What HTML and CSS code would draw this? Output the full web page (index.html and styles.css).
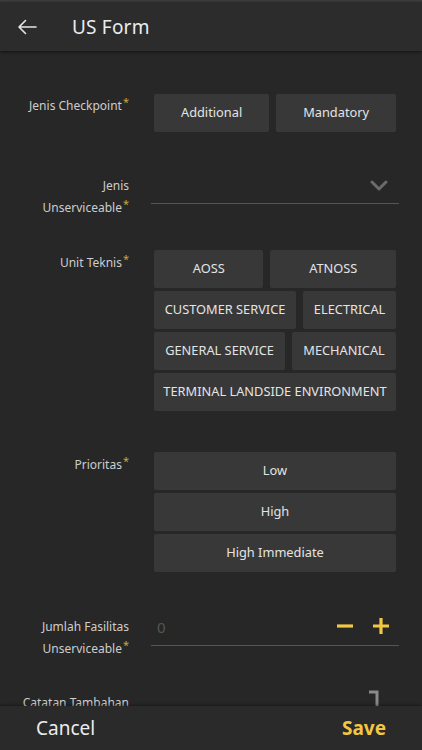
FILE: index.html
```html
<!DOCTYPE html>
<html>
<head>
<meta charset="utf-8">
<link rel="stylesheet" href="styles.css">
</head>
<body>
<div class="app">
  <header class="topbar">
    <svg class="back" width="20" height="16" viewBox="0 0 20 16"><path d="M19 8H2M8.5 1.5L2 8l6.5 6.5" fill="none" stroke="#e6e6e6" stroke-width="1.6" stroke-linecap="round" stroke-linejoin="round"/></svg>
    <h1 class="title">US Form</h1>
  </header>
  <main class="form">
    <div class="row row-first">
      <div class="label">Jenis Checkpoint<span class="req">*</span></div>
      <div class="field chips">
        <div class="chip">Additional</div>
        <div class="chip">Mandatory</div>
      </div>
    </div>
    <div class="row row-select">
      <div class="label">Jenis<br>Unserviceable<span class="req">*</span></div>
      <div class="field line-field">
        <svg class="chev" width="18" height="11" viewBox="0 0 18 11"><path d="M2 2l7 7 7-7" fill="none" stroke="#6a6a6a" stroke-width="3" stroke-linecap="round" stroke-linejoin="round"/></svg>
      </div>
    </div>
    <div class="row row-unit">
      <div class="label">Unit Teknis<span class="req">*</span></div>
      <div class="field chips wrap">
        <div class="chip">AOSS</div>
        <div class="chip">ATNOSS</div>
        <div class="chip">CUSTOMER SERVICE</div>
        <div class="chip">ELECTRICAL</div>
        <div class="chip">GENERAL SERVICE</div>
        <div class="chip">MECHANICAL</div>
        <div class="chip">TERMINAL LANDSIDE ENVIRONMENT</div>
      </div>
    </div>
    <div class="row row-prio">
      <div class="label">Prioritas<span class="req">*</span></div>
      <div class="field stack">
        <div class="chip">Low</div>
        <div class="chip">High</div>
        <div class="chip">High Immediate</div>
      </div>
    </div>
    <div class="row row-count">
      <div class="label">Jumlah Fasilitas<br>Unserviceable<span class="req">*</span></div>
      <div class="field line-field count">
        <span class="placeholder">0</span>
        <div class="steppers">
          <svg width="18" height="18" viewBox="0 0 18 18"><path d="M1 9h16" stroke="#f2c744" stroke-width="3.2"/></svg>
          <svg width="18" height="18" viewBox="0 0 18 18"><path d="M1 9h16M9 1v16" stroke="#f2c744" stroke-width="3.2"/></svg>
        </div>
      </div>
    </div>
    <div class="row row-notes">
      <div class="label">Catatan Tambahan</div>
      <div class="field notes">
        <svg class="resize" width="12" height="20" viewBox="0 0 12 20"><path d="M1 2h8v18" fill="none" stroke="#8a8a8a" stroke-width="3"/></svg>
      </div>
    </div>
  </main>
  <footer class="bottombar">
    <span class="cancel">Cancel</span>
    <span class="save">Save</span>
  </footer>
</div>
</body>
</html>
```
FILE: styles.css
```css
* { box-sizing: border-box; }
html, body { margin: 0; padding: 0; }
body {
  width: 422px;
  height: 750px;
  overflow: hidden;
  background: #272727;
  font-family: "Noto Sans", "Open Sans", sans-serif;
  color: #d6d6d6;
}
.app {
  position: relative;
  height: 750px;
  display: flex;
  flex-direction: column;
  border-top: 2px solid #3c3c3c;
}
.topbar {
  height: 49px;
  flex: none;
  display: flex;
  align-items: center;
  background: #2c2c2c;
  box-shadow: 0 1px 3px rgba(0,0,0,0.55);
  position: relative;
  z-index: 2;
}
.back { margin-left: 17px; margin-top: 1px; }
.title {
  margin: 0 0 0 35px;
  font-size: 19px;
  font-weight: 400;
  color: #ececec;
  letter-spacing: 0.2px;
}
.form {
  flex: 1;
  overflow: hidden;
  padding-top: 43px;
}
.row {
  display: flex;
  align-items: flex-start;
}
.label {
  width: 130px;
  flex: none;
  text-align: right;
  font-size: 12px;
  line-height: 22px;
  color: #cdcdcd;
  padding-right: 1px;
  margin-top: 1px;
}
.req {
  position: relative;
  top: -4px;
  color: #c9a640;
  font-size: 11px;
  margin-left: 1px;
}
.field {
  margin-left: 24px;
  width: 242px;
}
.chips {
  display: flex;
  gap: 3px 7px;
}
.chips.wrap { flex-wrap: wrap; }
.chip {
  flex: 1 1 auto;
  height: 38px;
  display: flex;
  align-items: center;
  justify-content: center;
  padding: 0 8px 3px;
  background: #383838;
  border-radius: 2px;
  font-size: 12.8px;
  color: #e4e4e4;
  white-space: nowrap;
}
.row-first .label { margin-top: 1px; }
.row-select { margin-top: 42px; }
.line-field {
  margin-left: 21px;
  width: 248px;
  border-bottom: 1px solid #555;
  display: flex;
  align-items: center;
  justify-content: flex-end;
}
.row-select .line-field { height: 30px; }
.chev { margin-right: 11px; margin-top: -6px; }
.row-unit { margin-top: 31px; }
.row-unit .label { margin-top: 2px; }
.row-prio { margin-top: 41px; }
.row-prio .label { margin-top: 2px; }
.stack {
  display: flex;
  flex-direction: column;
  gap: 3px;
}
.row-count { margin-top: 43px; }
.count {
  height: 31px;
  justify-content: space-between;
}
.placeholder {
  margin-left: 6px;
  font-size: 15px;
  color: #555;
  margin-top: -6px;
}
.steppers {
  display: flex;
  gap: 18px;
  margin-right: 9px;
  margin-top: -8px;
}
.row-notes { margin-top: 31px; }
.notes {
  height: 30px;
  display: flex;
  justify-content: flex-end;
}
.resize { margin-right: 16px; margin-top: -1px; }
.bottombar {
  flex: none;
  height: 44px;
  display: flex;
  align-items: center;
  justify-content: space-between;
  padding: 0 36px;
  background: #2a2a2a;
  box-shadow: 0 -1px 3px rgba(0,0,0,0.4);
  position: relative;
  z-index: 2;
}
.cancel { font-size: 19px; color: #ececec; }
.save { font-size: 19px; font-weight: 700; color: #f2c744; }
```
